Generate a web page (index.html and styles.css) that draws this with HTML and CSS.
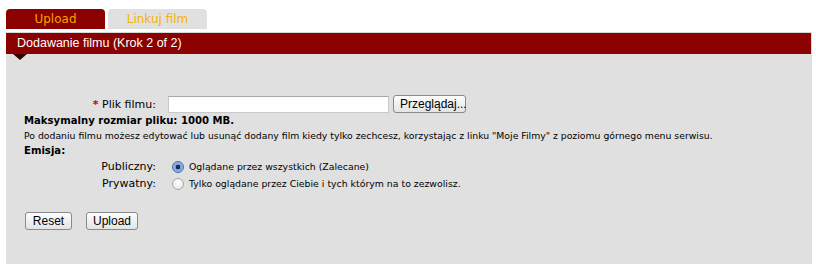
FILE: index.html
```html
<!DOCTYPE html>
<html lang="pl">
<head>
  <meta charset="UTF-8" />
  <title>Dodawanie filmu</title>
  <link rel="stylesheet" href="styles.css">
</head>
<body>
  <div class="page">
    <div class="tabs">
      <span class="tab active">Upload</span>
      <span class="tab">Linkuj film</span>
    </div>

    <div class="box">
      <h2 class="boxTitle">Dodawanie filmu (Krok 2 of 2)</h2>

      <form class="boxBody">
        <div class="row fileRow">
          <label class="lbl" for="plik"><span class="req">*</span> Plik filmu:</label>
          <input type="text" id="plik" class="fileInput">
          <button type="button" class="btn">Przeglądaj...</button>
        </div>

        <p class="note bold">Maksymalny rozmiar pliku: 1000 MB.</p>
        <p class="note">Po dodaniu filmu możesz edytować lub usunąć dodany film kiedy tylko zechcesz, korzystając z linku "Moje Filmy" z poziomu górnego menu serwisu.</p>
        <p class="note bold">Emisja:</p>

        <div class="row radioRow">
          <span class="lbl">Publiczny:</span>
          <label class="opt"><input type="radio" name="emisja" checked> Oglądane przez wszystkich (Zalecane)</label>
        </div>
        <div class="row radioRow">
          <span class="lbl">Prywatny:</span>
          <label class="opt"><input type="radio" name="emisja"> Tylko oglądane przez Ciebie i tych którym na to zezwolisz.</label>
        </div>

        <div class="actions">
          <button type="reset" class="btn">Reset</button>
          <button type="submit" class="btn">Upload</button>
        </div>
      </form>
    </div>
  </div>
</body>
</html>
```

FILE: styles.css
```css
* {
  box-sizing: border-box;
  margin: 0;
  padding: 0;
}

body {
  background: #fff;
  font-family: "DejaVu Sans", Verdana, sans-serif;
  color: #000;
}

.page {
  padding: 9px 4px 0 6px;
}

.tabs {
  display: flex;
  gap: 3px;
  height: 20px;
}

.tab {
  width: 99px;
  height: 20px;
  border-radius: 4px 4px 0 0;
  background: #e0e0e0;
  color: #f5b400;
  font-size: 12px;
  line-height: 20px;
  text-align: center;
}

.tab.active {
  background: #8b0000;
  color: #f0a800;
}

.box {
  margin-top: 3px;
  background: #e0e0e0;
  height: 232px;
}

.boxTitle {
  position: relative;
  background: #8b0000;
  border-top: 1px solid #d8d8d8;
  border-right: 1px solid #d8d8d8;
  color: #fff;
  font-family: "Liberation Sans", Arial, sans-serif;
  font-size: 12.5px;
  font-weight: normal;
  height: 22px;
  line-height: 20px;
  padding-left: 11px;
}

.boxTitle::after {
  content: "";
  position: absolute;
  left: 7px;
  top: 21px;
  border-left: 7px solid transparent;
  border-right: 7px solid transparent;
  border-top: 6px solid #3a0000;
}

.boxBody {
  padding: 41px 18px 0 18px;
}

.row {
  display: flex;
  align-items: center;
}

.lbl {
  width: 132px;
  text-align: right;
  font-size: 11px;
  color: #000;
}

.req {
  color: #d00000;
  font-weight: bold;
}

.fileRow {
  height: 18px;
}

.fileInput {
  margin-left: 12px;
  width: 221px;
  height: 17px;
  border: 1px solid #c8c8c8;
  border-top-color: #a8a8a8;
  background: #fff;
}

.btn {
  height: 18px;
  padding: 0 6px;
  border: 1px solid #8a8a8a;
  border-radius: 3px;
  background: linear-gradient(#fdfdfd, #e4e4e4);
  font-family: "Liberation Sans", Arial, sans-serif;
  font-size: 12px;
  color: #000;
}

.fileRow .btn {
  margin-left: 4px;
  width: 73px;
}

.note {
  font-size: 9.3px;
  line-height: 15px;
}

.note.bold {
  font-size: 10.1px;
  font-weight: bold;
}

.radioRow {
  height: 17px;
}

.opt {
  display: flex;
  align-items: center;
  gap: 5px;
  margin-left: 16px;
  font-size: 9.35px;
}

.opt input {
  appearance: none;
  width: 12px;
  height: 12px;
  border-radius: 50%;
  border: 1px solid #a8a8a8;
  background: radial-gradient(circle at 50% 35%, #ffffff, #e2e2e2);
}

.opt input:checked {
  border-color: #4a6a9a;
  background: radial-gradient(circle, #1a2a4a 0 2px, #6f9ee0 2.5px, #b9d3f4 100%);
}

.actions {
  display: flex;
  gap: 14px;
  margin-top: 20px;
  padding-left: 1px;
}

.actions .btn:first-child {
  width: 47px;
}

.actions .btn:last-child {
  width: 52px;
}
```
